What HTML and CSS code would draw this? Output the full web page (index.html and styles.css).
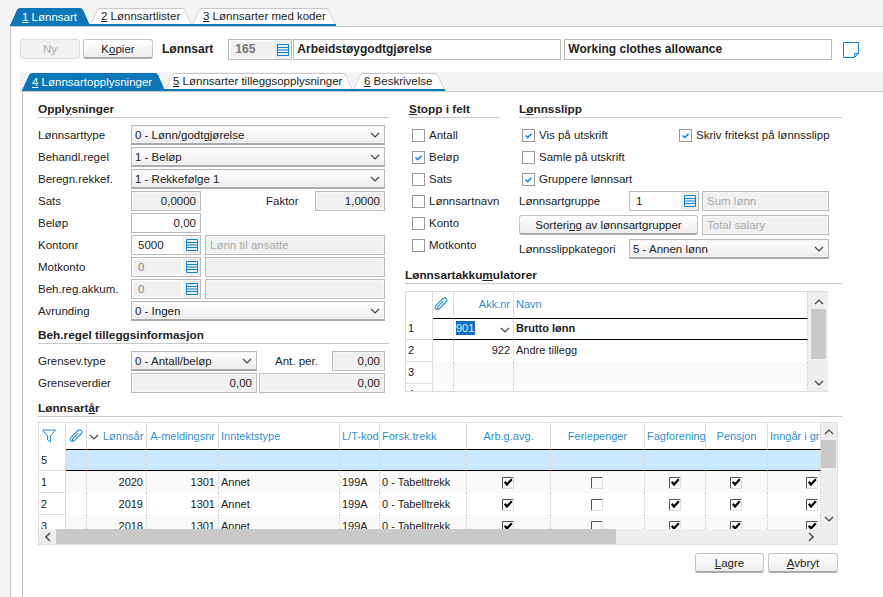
FILE: index.html
```html
<!DOCTYPE html>
<html lang="en">
<head>
    <meta charset="UTF-8">
    <title>Lønnsart</title>
    <link rel="stylesheet" href="styles.css">
</head>
<body>
    <svg class="defs" width="0" height="0">
        <symbol id="chev" viewBox="0 0 10 6"><path d="M1 1l4 4 4-4" fill="none" stroke="#444" stroke-width="1.2"/></symbol>
        <symbol id="list" viewBox="0 0 12 12"><path d="M.5.5h11v11H.5zM.5 3.5h11M.5 6h11M.5 8.5h11" fill="none" stroke="#0a84d6"/></symbol>
        <symbol id="tick" viewBox="0 0 13 13"><path d="M3 6.5l2.5 2.5L10 4.5" fill="none" stroke="#1b8fdc" stroke-width="2"/></symbol>
        <symbol id="clip" viewBox="0 0 14 14"><path d="M12 4.5L5.5 11.5C4 13 1.5 12.5 1.2 11 1 10 1.5 9 2.2 8.2L8.5 2C9.8.8 11.5.8 12.3 1.6 13.2 2.5 13 4 12 5L6 11.2C5.2 12 4.2 11.8 3.8 11.3 3.3 10.7 3.6 9.9 4.3 9.2L9.3 4.2" fill="none" stroke="#2a94dc" stroke-width="1.1"/></symbol>
        <symbol id="on" viewBox="0 0 12 12"><path d="M.5 11.5V.5h11" fill="none" stroke="#555"/><path d="M11.5.5v11H.5" fill="none" stroke="#ddd"/><path d="M2.8 4.8l2.2 2.7L9.8 2.2" fill="none" stroke="#000" stroke-width="2.2"/></symbol>
        <symbol id="off" viewBox="0 0 12 12"><path d="M.5 11.5V.5h11" fill="none" stroke="#555"/><path d="M11.5.5v11H.5" fill="none" stroke="#ddd"/></symbol>
    </svg>

    <div class="app">
        <div class="tabs main-tabs">
            <div class="tab active t1"><u>1</u> Lønnsart</div>
            <div class="tab t2"><u>2</u> Lønnsartlister</div>
            <div class="tab t3"><u>3</u> Lønnsarter med koder</div>
        </div>

        <div class="panel">
            <div class="toolbar">
                <button class="btn btn-ny" disabled>Ny</button>
                <button class="btn btn-kopier">K<u>o</u>pier</button>
                <span class="toolbar-label">Lønnsart</span>
                <div class="lookup code disabled"><span class="val">165</span><span class="lookup-btn"><svg width="12" height="12"><use href="#list"/></svg></span></div>
                <div class="field name">Arbeidstøygodtgjørelse</div>
                <div class="field name name-en">Working clothes allowance</div>
                <svg class="note" width="16" height="16" viewBox="0 0 16 16"><path d="M.5.5h15v11l-4 4H.5zM15.5 11.5h-4v4" fill="none" stroke="#0a84d6"/></svg>
            </div>

            <div class="tabs sub-tabs">
                <div class="tab active t4"><u>4</u> Lønnsartopplysninger</div>
                <div class="tab t5"><u>5</u> Lønnsarter tilleggsopplysninger</div>
                <div class="tab t6"><u>6</u> Beskrivelse</div>
            </div>

            <div class="content">
                <div class="top">
                    <div class="left">
                        <h3>Oppl<u>y</u>sninger</h3>
                        <div class="rows">
                            <div class="row"><label>Lønnsarttype</label><div class="select wide">0 - Lønn/godtgjørelse<svg width="10" height="6"><use href="#chev"/></svg></div></div>
                            <div class="row"><label>Behandl.regel</label><div class="select wide">1 - Beløp<svg width="10" height="6"><use href="#chev"/></svg></div></div>
                            <div class="row"><label>Beregn.rekkef.</label><div class="select wide">1 - Rekkefølge 1<svg width="10" height="6"><use href="#chev"/></svg></div></div>
                            <div class="row"><label>Sats</label><div class="field num disabled w70">0,0000</div><span class="inline-label faktor">Faktor</span><div class="field num disabled w70">1,0000</div></div>
                            <div class="row"><label>Beløp</label><div class="field num w70">0,00</div></div>
                            <div class="row"><label>Kontonr</label><div class="lookup w70"><span class="val">5000</span><span class="lookup-btn"><svg width="12" height="12"><use href="#list"/></svg></span></div><div class="field disabled grow muted">Lønn til ansatte</div></div>
                            <div class="row"><label>Motkonto</label><div class="lookup w70 disabled"><span class="val">0</span><span class="lookup-btn"><svg width="12" height="12"><use href="#list"/></svg></span></div><div class="field disabled grow"></div></div>
                            <div class="row"><label>Beh.reg.akkum.</label><div class="lookup w70 disabled"><span class="val">0</span><span class="lookup-btn"><svg width="12" height="12"><use href="#list"/></svg></span></div><div class="field disabled grow"></div></div>
                            <div class="row"><label>Avrunding</label><div class="select wide">0 - Ingen<svg width="10" height="6"><use href="#chev"/></svg></div></div>
                        </div>
                        <h3 class="second">Beh.re<u>g</u>el tilleggsinformasjon</h3>
                        <div class="rows">
                            <div class="row"><label>Grensev.type</label><div class="select half">0 - Antall/beløp<svg width="10" height="6"><use href="#chev"/></svg></div><span class="inline-label antper">Ant. per.</span><div class="field num disabled w53">0,00</div></div>
                            <div class="row tight"><label>Grenseverdier</label><div class="field num disabled half">0,00</div><div class="field num disabled half">0,00</div></div>
                        </div>
                    </div>

                    <div class="right">
                        <div class="right-top">
                            <div class="stopp">
                                <h3><u>S</u>topp i felt</h3>
                                <div class="rows">
                                    <div class="check"><span class="box"></span>Antall</div>
                                    <div class="check"><span class="box"><svg width="13" height="13"><use href="#tick"/></svg></span>Beløp</div>
                                    <div class="check"><span class="box"></span>Sats</div>
                                    <div class="check"><span class="box"></span>Lønnsartnavn</div>
                                    <div class="check"><span class="box"></span>Konto</div>
                                    <div class="check"><span class="box"></span>Motkonto</div>
                                </div>
                            </div>
                            <div class="slip">
                                <h3>L<u>ø</u>nnsslipp</h3>
                                <div class="rows">
                                    <div class="slip-checks">
                                        <div class="check"><span class="box"><svg width="13" height="13"><use href="#tick"/></svg></span>Vis på utskrift</div>
                                        <div class="check"><span class="box"><svg width="13" height="13"><use href="#tick"/></svg></span>Skriv fritekst på lønnsslipp</div>
                                    </div>
                                    <div class="check"><span class="box"></span>Samle på utskrift</div>
                                    <div class="check"><span class="box"><svg width="13" height="13"><use href="#tick"/></svg></span>Gruppere lønnsart</div>
                                    <div class="row"><label class="slip-label">Lønnsartgruppe</label><div class="lookup w70"><span class="val">1</span><span class="lookup-btn"><svg width="12" height="12"><use href="#list"/></svg></span></div><div class="field disabled muted w127">Sum lønn</div></div>
                                    <div class="row btn-row"><button class="btn btn-sort">Sorteri<u>ng</u> av lønnsartgrupper</button><div class="field disabled muted w127">Total salary</div></div>
                                    <div class="row btn-row"><label class="slip-label">Lønnsslippkategori</label><div class="select w200">5 - Annen lønn<svg width="10" height="6"><use href="#chev"/></svg></div></div>
                                </div>
                            </div>
                        </div>
                        <h3 class="akk-title">Lønnsartakku<u>m</u>ulatorer</h3>
                        <div class="akk">
                            <div class="akk-view">
                                <table class="akk-table">
                                    <colgroup><col class="c27"><col class="c21"><col class="c60"><col></colgroup>
                                    <tr class="head"><th></th><th><svg width="14" height="14"><use href="#clip"/></svg></th><th class="r">Akk.nr</th><th class="l">Navn</th></tr>
                                    <tr class="current"><td class="rh">1</td><td></td><td class="edit"><span class="hl">901</span><svg width="10" height="6"><use href="#chev"/></svg></td><td class="l"><b>Brutto lønn</b></td></tr>
                                    <tr><td class="rh">2</td><td></td><td class="r">922</td><td class="l">Andre tillegg</td></tr>
                                    <tr class="alt"><td class="rh">3</td><td></td><td></td><td></td></tr>
                                    <tr><td class="rh">4</td><td></td><td></td><td></td></tr>
                                </table>
                            </div>
                            <div class="vscroll akk-scroll">
                                <svg width="10" height="6" class="up"><use href="#chev"/></svg>
                                <span class="thumb"></span>
                                <svg width="10" height="6"><use href="#chev"/></svg>
                            </div>
                        </div>
                    </div>
                </div>

                <h3 class="year-title">Lønnsart<u>å</u>r</h3>
                <div class="years">
                    <div class="years-view">
                        <table class="years-table">
                            <colgroup><col class="c27"><col class="c21"><col class="c60"><col class="c72"><col class="c121"><col class="c40"><col class="c87"><col class="c84"><col class="c94"><col class="c61"><col class="c62"><col class="c53"></colgroup>
                            <tr class="head">
                                <th class="filter"><svg width="14" height="14" viewBox="0 0 14 14"><path d="M.5 1h13L8.5 7v6l-3-2V7z" fill="none" stroke="#1b8fdc"/></svg></th>
                                <th><svg width="14" height="14"><use href="#clip"/></svg></th>
                                <th class="r"><svg width="10" height="6" class="sort"><use href="#chev"/></svg>Lønnsår</th>
                                <th class="r">A-meldingsnr</th>
                                <th class="l">Inntektstype</th>
                                <th class="l">L/T-kod</th>
                                <th class="l">Forsk.trekk</th>
                                <th>Arb.g.avg.</th>
                                <th>Feriepenger</th>
                                <th>Fagforening</th>
                                <th>Pensjon</th>
                                <th class="l">Inngår i gruppe</th>
                            </tr>
                            <tr class="selected"><td class="rh">5</td><td></td><td></td><td></td><td></td><td></td><td></td><td></td><td></td><td></td><td></td><td></td></tr>
                            <tr class="alt">
                                <td class="rh">1</td><td></td><td class="r">2020</td><td class="r">1301</td><td class="l">Annet</td><td class="l">199A</td><td class="l">0 - Tabelltrekk</td>
                                <td><svg width="12" height="12"><use href="#on"/></svg></td><td><svg width="12" height="12"><use href="#off"/></svg></td><td><svg width="12" height="12"><use href="#on"/></svg></td><td><svg width="12" height="12"><use href="#on"/></svg></td><td class="last"><svg width="12" height="12"><use href="#on"/></svg></td>
                            </tr>
                            <tr>
                                <td class="rh">2</td><td></td><td class="r">2019</td><td class="r">1301</td><td class="l">Annet</td><td class="l">199A</td><td class="l">0 - Tabelltrekk</td>
                                <td><svg width="12" height="12"><use href="#on"/></svg></td><td><svg width="12" height="12"><use href="#off"/></svg></td><td><svg width="12" height="12"><use href="#on"/></svg></td><td><svg width="12" height="12"><use href="#on"/></svg></td><td class="last"><svg width="12" height="12"><use href="#on"/></svg></td>
                            </tr>
                            <tr class="alt">
                                <td class="rh">3</td><td></td><td class="r">2018</td><td class="r">1301</td><td class="l">Annet</td><td class="l">199A</td><td class="l">0 - Tabelltrekk</td>
                                <td><svg width="12" height="12"><use href="#on"/></svg></td><td><svg width="12" height="12"><use href="#off"/></svg></td><td><svg width="12" height="12"><use href="#on"/></svg></td><td><svg width="12" height="12"><use href="#on"/></svg></td><td class="last"><svg width="12" height="12"><use href="#on"/></svg></td>
                            </tr>
                        </table>
                    </div>
                    <div class="vscroll years-scroll">
                        <svg width="10" height="6" class="up"><use href="#chev"/></svg>
                        <span class="thumb"></span>
                        <svg width="10" height="6"><use href="#chev"/></svg>
                    </div>
                    <div class="hscroll">
                        <svg width="6" height="10" viewBox="0 0 6 10"><path d="M5 1L1 5l4 4" fill="none" stroke="#555" stroke-width="1.6"/></svg>
                        <span class="thumb"></span>
                        <svg width="6" height="10" viewBox="0 0 6 10"><path d="M1 1l4 4-4 4" fill="none" stroke="#555" stroke-width="1.6"/></svg>
                    </div>
                </div>

                <div class="actions">
                    <button class="btn btn-lagre"><u>L</u>agre</button>
                    <button class="btn"><u>A</u>vbryt</button>
                </div>
            </div>
        </div>
    </div>
</body>
</html>
```

FILE: styles.css
```css
:root {
    --line: #c8c8c8;
    --field-border: #bbb;
    --disabled: #f0f0f0;
    --blue: #0b76b8;
    --head-blue: #2f8fd3;
    --text: #222;
}

* {
    box-sizing: border-box;
}

body {
    margin: 0;
    background: #f3f3f3;
    font-family: "Liberation Sans", Arial, sans-serif;
    font-size: 11.5px;
    color: var(--text);
}

u {
    text-decoration: underline;
}

.defs {
    position: absolute;
}

.app {
    height: 597px;
    padding-left: 10px;
    overflow: hidden;
    display: flex;
    flex-direction: column;
}

/* tabs */
.tabs {
    display: flex;
    align-items: flex-end;
    flex: none;
}

.main-tabs {
    height: 26px;
}

.sub-tabs {
    height: 20px;
    margin-left: 9px;
    padding-left: 2px;
    background: #f3f3f3;
    border-bottom: 1px solid var(--line);
}

.tab {
    position: relative;
    height: 18px;
    line-height: 17px;
    white-space: nowrap;
    border-bottom: 2px solid var(--blue);
    z-index: 0;
}

.tab::before,
.tab::after {
    content: "";
    position: absolute;
    top: 0;
    bottom: 0;
    width: 55%;
    background: #fff;
    border-top: 1px solid var(--line);
    z-index: -1;
}

.tab::before {
    left: 4px;
    transform: skewX(-24deg);
    border-left: 1px solid var(--line);
    border-radius: 3px 0 0 0;
}

.tab::after {
    right: 4px;
    transform: skewX(24deg);
    border-right: 1px solid var(--line);
    border-radius: 0 3px 0 0;
}

.tab.active {
    color: #fff;
    line-height: 18px;
}

.tab.active::before,
.tab.active::after {
    background: var(--blue);
    border-color: var(--blue);
}

.t1 { width: 80px; padding-left: 12px; }
.t2 { width: 102px; padding-left: 11px; }
.t3 { width: 144px; padding-left: 11px; }
.t4 { width: 143px; padding-left: 10px; }
.t5 { width: 188px; padding-left: 8px; }
.t6 { width: 92px; padding-left: 11px; }

/* panels */
.panel {
    flex: 1;
    background: #fff;
    border-left: 1px solid var(--line);
    border-top: 1px solid var(--line);
    display: flex;
    flex-direction: column;
}

.toolbar {
    height: 45px;
    flex: none;
    display: flex;
    align-items: flex-start;
    padding: 12px 0 0 9px;
}

.toolbar-label {
    font-size: 12px;
    font-weight: bold;
    line-height: 20px;
    margin: 0 15px 0 9px;
}

.note {
    margin: 3px 0 0 11px;
}

.content {
    flex: 1;
    margin-left: 11px;
    padding: 9px 45px 0 15px;
    border-left: 1px solid var(--line);
}

.top {
    display: flex;
}

.left {
    width: 351px;
    flex: none;
}

.right {
    width: 437px;
    flex: none;
    margin-left: 16px;
}

.right-top {
    display: flex;
    padding-left: 4px;
    gap: 20px;
}

.stopp {
    width: 90px;
}

.slip {
    width: 323px;
}

h3 {
    margin: 0 0 7px;
    height: 17px;
    line-height: 16px;
    font-size: 11.8px;
    font-weight: bold;
    border-bottom: 1px solid var(--line);
}

h3.second {
    margin-top: 6px;
}

.akk-title {
    margin: 8px 0 7px;
}

.year-title {
    margin: 7px -4px 5px 0;
}

.rows {
    display: flex;
    flex-direction: column;
    gap: 2px;
}

.row {
    display: flex;
    height: 20px;
    align-items: center;
}

.row label {
    width: 93px;
    flex: none;
}

.row label.slip-label {
    width: 110px;
}

.row .field + .field,
.row .lookup + .field {
    margin-left: 4px;
}

.row.tight .field + .field {
    margin-left: 2px;
}

.slip .row .lookup + .field {
    margin-left: 3px;
}

.btn-row {
    margin-top: 2px;
}

/* inputs */
.field,
.lookup,
.select {
    height: 20px;
    line-height: 18px;
    border: 1px solid var(--field-border);
    background: #fff;
    white-space: nowrap;
    overflow: hidden;
}

.field {
    padding: 0 4px;
}

.field.num {
    text-align: right;
}

.field.disabled,
.lookup.disabled .val {
    background: var(--disabled);
    box-shadow: inset 0 0 0 1px #f7f7f7;
}

.field.muted {
    color: #aaa;
}

.field.name {
    width: 268px;
    height: 21px;
    margin-left: 1px;
    font-size: 12px;
    font-weight: bold;
    line-height: 19px;
    padding: 0 3px;
}

.field.name-en {
    margin-left: 3px;
}

.w70 { width: 70px; flex: none; }
.w53 { width: 53px; flex: none; }
.w127 { width: 127px; flex: none; margin-left: 4px; }
.w200 { width: 200px; flex: none; }
.half { width: 126px; flex: none; }
.wide { width: 254px; flex: none; }
.grow { flex: 1; margin-right: 4px; }

.inline-label {
    flex: none;
}

.faktor {
    width: 49px;
    margin-left: 65px;
}

.antper {
    width: 57px;
    margin-left: 18px;
}

.lookup {
    display: flex;
}

.lookup .val {
    flex: 1;
    padding: 0 5px;
    margin: 1px;
    line-height: 16px;
}

.lookup.disabled .val {
    color: #888;
}

.lookup-btn {
    width: 17px;
    flex: none;
    background: #eee;
    display: flex;
    align-items: center;
    justify-content: center;
}

.lookup.code {
    width: 64px;
    height: 21px;
}

.lookup.code .val {
    font-size: 12px;
    font-weight: bold;
    line-height: 17px;
    color: #777;
}

.select {
    display: flex;
    align-items: center;
    justify-content: space-between;
    padding: 1px 4px 0 3px;
    background: linear-gradient(#fff, #ececec);
    border-bottom: 2px solid #aaa;
    box-shadow: inset 0 0 0 1px #f4f4f4;
    line-height: 17px;
}

.btn {
    height: 20px;
    width: 70px;
    padding: 0;
    font: inherit;
    color: var(--text);
    background: linear-gradient(#fff, #ececec);
    border: 1px solid #c4c4c4;
    border-bottom: 2px solid #aaa;
    border-radius: 3px;
}

.btn-ny {
    width: 60px;
    margin-right: 3px;
    color: #aaa;
    background: #f1f1f1;
    border-color: #ddd;
    border-bottom: 1px solid #ddd;
}

.btn-sort {
    width: 179px;
    flex: none;
}

.btn-lagre {
    width: 69px;
}

/* checkboxes */
.check {
    height: 20px;
    display: flex;
    align-items: center;
    padding-left: 3px;
    white-space: nowrap;
}

.box {
    width: 13px;
    height: 13px;
    margin-right: 4px;
    flex: none;
    border: 1px solid #999;
    background: #fff;
    display: flex;
    align-items: center;
    justify-content: center;
}

.slip-checks {
    display: grid;
    grid-template-columns: 157px 1fr;
}

/* grids */
.akk {
    display: flex;
    width: 423px;
    height: 101px;
    border: 1px solid #ddd;
    border-right: 0;
}

.akk-view {
    width: 403px;
    overflow: hidden;
}

table {
    border-collapse: separate;
    border-spacing: 0;
    table-layout: fixed;
    width: 100%;
    font-size: 11px;
}

th {
    height: 26px;
    padding: 0 2px;
    font-weight: normal;
    color: var(--head-blue);
    border-right: 1px solid #ddd;
    white-space: nowrap;
    overflow: hidden;
    text-align: center;
}

td {
    height: 22px;
    padding: 0 3px 0 2px;
    border-right: 1px dotted #ccc;
    white-space: nowrap;
    overflow: hidden;
    text-align: center;
}

th svg,
td svg {
    vertical-align: middle;
}

th.r, td.r { text-align: right; }
th.l, td.l { text-align: left; }
th.r { padding-right: 3px; }

th.filter {
    text-align: left;
    padding-left: 3px;
}

.akk-table th,
.akk-table td {
    padding-bottom: 2px;
}

.akk-table th:nth-child(2) {
    padding-right: 5px;
    padding-left: 0;
}

td.last { text-align: right; padding-right: 2px; }

td.rh {
    text-align: left;
    background: #fff;
    border-right: 1px solid #ddd;
    border-bottom: 1px solid #ddd;
}

tr.alt td:not(.rh) { background: #fafafa; }

.c27 { width: 27px; }
.c21 { width: 21px; }
.c40 { width: 40px; }
.c53 { width: 53px; }
.c60 { width: 60px; }
.c61 { width: 61px; }
.c62 { width: 62px; }
.c72 { width: 72px; }
.c84 { width: 84px; }
.c87 { width: 87px; }
.c94 { width: 94px; }
.c121 { width: 121px; }

.current td {
    border-top: 1px solid #000;
    border-bottom: 1px solid #000;
}

.current td.rh {
    border-top: 0;
    border-bottom: 1px solid #ddd;
}

td.edit {
    text-align: left;
}

td.edit svg {
    float: right;
    margin: 6px 0 0 0;
}

.hl {
    background: #0a6fc8;
    color: #e8f2fb;
    padding: 1px 0;
    display: inline-block;
    width: 19px;
}

.selected td {
    background: #cbe8fd;
    border-top: 1px solid #000;
    border-bottom: 1px solid #000;
    border-right: 1px solid #ddd;
}

.selected td.rh {
    background: #fff;
    border-top: 0;
    border-bottom: 1px solid #ddd;
}

.sort {
    margin-right: 4px;
}

.years {
    width: 800px;
    height: 123px;
    border: 1px solid #e0e0e0;
    display: grid;
    grid-template-columns: 782px 16px;
    grid-template-rows: 106px 15px;
    background: #eee;
}

.years-view {
    overflow: hidden;
    background: #fff;
}

.years-table {
    width: 782px;
}

.vscroll {
    background: #eee;
    display: flex;
    flex-direction: column;
    align-items: center;
    justify-content: space-between;
}

.vscroll .up {
    transform: rotate(180deg);
}

.thumb {
    background: #c9c9c9;
    display: block;
}

.akk-scroll {
    width: 20px;
    padding: 7px 2px 5px 3px;
}

.akk-scroll .thumb {
    width: 15px;
    height: 50px;
    margin: 0 0 17px;
}

.years-scroll {
    padding: 6px 0 7px;
}

.years-scroll .thumb {
    width: 15px;
    height: 28px;
    margin: 0 0 44px;
    align-self: flex-start;
}

.hscroll {
    grid-column: 1;
    display: flex;
    align-items: center;
    background: #eee;
    padding-left: 6px;
}

.hscroll .thumb {
    width: 560px;
    height: 15px;
    margin: 0 192px 0 5px;
}

.actions {
    display: flex;
    justify-content: flex-end;
    gap: 4px;
    margin-top: 8px;
}
```
